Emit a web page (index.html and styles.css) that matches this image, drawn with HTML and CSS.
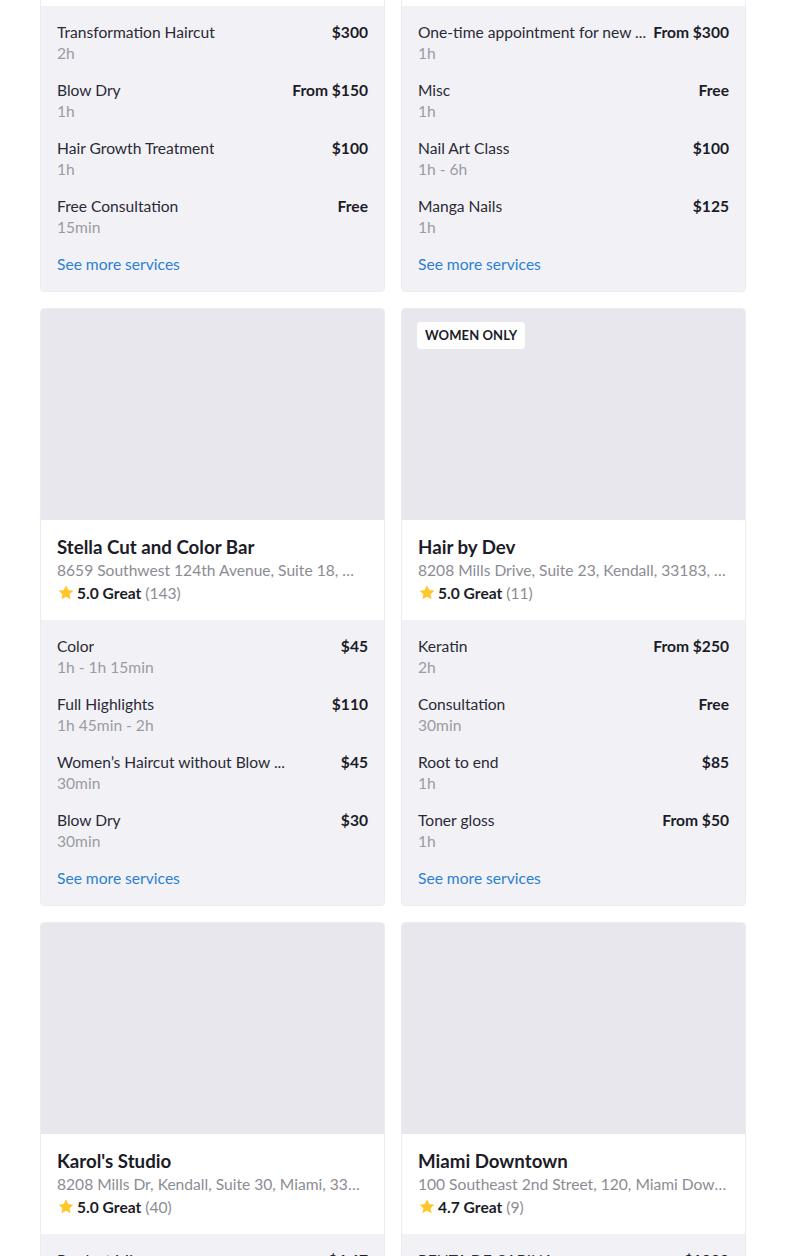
FILE: index.html
```html
<!DOCTYPE html>
<html>
<head>
<meta charset="utf-8">
<link rel="stylesheet" href="styles.css">
</head>
<body>
<main class="grid">
  <article class="card">
    <div class="photo"></div>
    <div class="info">
      <h2 class="name">Salon One</h2>
      <p class="address">123 Main Street, Miami, FL</p>
      <div class="rating"><svg class="star" viewBox="0 0 24 24"><path d="M12 1.8l3 6.2 6.8.9-5 4.7 1.3 6.8L12 17.1l-6.1 3.3 1.3-6.8-5-4.7 6.8-.9z"/></svg><b>5.0 Great</b><span class="count">(10)</span></div>
    </div>
    <div class="services">
      <div class="svc"><div class="svc-top"><span class="svc-name">Transformation Haircut</span><span class="price">$300</span></div><div class="dur">2h</div></div>
      <div class="svc"><div class="svc-top"><span class="svc-name">Blow Dry</span><span class="price">From $150</span></div><div class="dur">1h</div></div>
      <div class="svc"><div class="svc-top"><span class="svc-name">Hair Growth Treatment</span><span class="price">$100</span></div><div class="dur">1h</div></div>
      <div class="svc"><div class="svc-top"><span class="svc-name">Free Consultation</span><span class="price">Free</span></div><div class="dur">15min</div></div>
      <a class="more" href="#">See more services</a>
    </div>
  </article>

  <article class="card">
    <div class="photo"></div>
    <div class="info">
      <h2 class="name">Nail Studio</h2>
      <p class="address">456 Ocean Drive, Miami, FL</p>
      <div class="rating"><svg class="star" viewBox="0 0 24 24"><path d="M12 1.8l3 6.2 6.8.9-5 4.7 1.3 6.8L12 17.1l-6.1 3.3 1.3-6.8-5-4.7 6.8-.9z"/></svg><b>5.0 Great</b><span class="count">(12)</span></div>
    </div>
    <div class="services">
      <div class="svc"><div class="svc-top"><span class="svc-name">One-time appointment for new ...</span><span class="price">From $300</span></div><div class="dur">1h</div></div>
      <div class="svc"><div class="svc-top"><span class="svc-name">Misc</span><span class="price">Free</span></div><div class="dur">1h</div></div>
      <div class="svc"><div class="svc-top"><span class="svc-name">Nail Art Class</span><span class="price">$100</span></div><div class="dur">1h - 6h</div></div>
      <div class="svc"><div class="svc-top"><span class="svc-name">Manga Nails</span><span class="price">$125</span></div><div class="dur">1h</div></div>
      <a class="more" href="#">See more services</a>
    </div>
  </article>

  <article class="card">
    <div class="photo"></div>
    <div class="info">
      <h2 class="name">Stella Cut and Color Bar</h2>
      <p class="address">8659 Southwest 124th Avenue, Suite 18, Miami, 33183</p>
      <div class="rating"><svg class="star" viewBox="0 0 24 24"><path d="M12 1.8l3 6.2 6.8.9-5 4.7 1.3 6.8L12 17.1l-6.1 3.3 1.3-6.8-5-4.7 6.8-.9z"/></svg><b>5.0 Great</b><span class="count">(143)</span></div>
    </div>
    <div class="services">
      <div class="svc"><div class="svc-top"><span class="svc-name">Color</span><span class="price">$45</span></div><div class="dur">1h - 1h 15min</div></div>
      <div class="svc"><div class="svc-top"><span class="svc-name">Full Highlights</span><span class="price">$110</span></div><div class="dur">1h 45min - 2h</div></div>
      <div class="svc"><div class="svc-top"><span class="svc-name">Women’s Haircut without Blow ...</span><span class="price">$45</span></div><div class="dur">30min</div></div>
      <div class="svc"><div class="svc-top"><span class="svc-name">Blow Dry</span><span class="price">$30</span></div><div class="dur">30min</div></div>
      <a class="more" href="#">See more services</a>
    </div>
  </article>

  <article class="card">
    <div class="photo"><span class="badge">WOMEN ONLY</span></div>
    <div class="info">
      <h2 class="name">Hair by Dev</h2>
      <p class="address">8208 Mills Drive, Suite 23, Kendall, 33183, Miami</p>
      <div class="rating"><svg class="star" viewBox="0 0 24 24"><path d="M12 1.8l3 6.2 6.8.9-5 4.7 1.3 6.8L12 17.1l-6.1 3.3 1.3-6.8-5-4.7 6.8-.9z"/></svg><b>5.0 Great</b><span class="count">(11)</span></div>
    </div>
    <div class="services">
      <div class="svc"><div class="svc-top"><span class="svc-name">Keratin</span><span class="price">From $250</span></div><div class="dur">2h</div></div>
      <div class="svc"><div class="svc-top"><span class="svc-name">Consultation</span><span class="price">Free</span></div><div class="dur">30min</div></div>
      <div class="svc"><div class="svc-top"><span class="svc-name">Root to end</span><span class="price">$85</span></div><div class="dur">1h</div></div>
      <div class="svc"><div class="svc-top"><span class="svc-name">Toner gloss</span><span class="price">From $50</span></div><div class="dur">1h</div></div>
      <a class="more" href="#">See more services</a>
    </div>
  </article>

  <article class="card">
    <div class="photo"></div>
    <div class="info">
      <h2 class="name">Karol's Studio</h2>
      <p class="address">8208 Mills Dr, Kendall, Suite 30, Miami, 33183</p>
      <div class="rating"><svg class="star" viewBox="0 0 24 24"><path d="M12 1.8l3 6.2 6.8.9-5 4.7 1.3 6.8L12 17.1l-6.1 3.3 1.3-6.8-5-4.7 6.8-.9z"/></svg><b>5.0 Great</b><span class="count">(40)</span></div>
    </div>
    <div class="services">
      <div class="svc"><div class="svc-top"><span class="svc-name">Product Mix</span><span class="price">$6.67</span></div><div class="dur">15min</div></div>
      <a class="more" href="#">See more services</a>
    </div>
  </article>

  <article class="card">
    <div class="photo"></div>
    <div class="info">
      <h2 class="name">Miami Downtown</h2>
      <p class="address">100 Southeast 2nd Street, 120, Miami Downtown, 33131</p>
      <div class="rating"><svg class="star" viewBox="0 0 24 24"><path d="M12 1.8l3 6.2 6.8.9-5 4.7 1.3 6.8L12 17.1l-6.1 3.3 1.3-6.8-5-4.7 6.8-.9z"/></svg><b>4.7 Great</b><span class="count">(9)</span></div>
    </div>
    <div class="services">
      <div class="svc"><div class="svc-top"><span class="svc-name">RENTA DE CABINA</span><span class="price">$1000</span></div><div class="dur">1h</div></div>
      <a class="more" href="#">See more services</a>
    </div>
  </article>
</main>
</body>
</html>
```

FILE: styles.css
```css
html, body {
  margin: 0;
  padding: 0;
  background: #ffffff;
}

body {
  font-family: "Lato", "Noto Sans", sans-serif;
  color: #1c1c28;
  height: 1256px;
  overflow: hidden;
}

.grid {
  display: grid;
  grid-template-columns: 345px 345px;
  column-gap: 16px;
  row-gap: 16px;
  margin: -306px 0 0 40px;
}

.card {
  border: 1px solid #ececf0;
  border-radius: 4px;
  overflow: hidden;
  background: #ffffff;
  display: flex;
  flex-direction: column;
}

.photo {
  height: 211px;
  background: #e7e7ed;
  padding: 13px 15px;
  box-sizing: border-box;
}

.badge {
  display: inline-block;
  background: #ffffff;
  border-radius: 4px;
  padding: 0 8px;
  height: 27px;
  line-height: 27px;
  font-size: 13px;
  font-weight: 700;
  letter-spacing: 0.1px;
  color: #1c1c28;
}

.info {
  padding: 15px 16px 16px;
}

.name {
  margin: 0;
  font-size: 18.7px;
  line-height: 24px;
  font-weight: 700;
  color: #1c1c28;
}

.address {
  margin: 0;
  font-size: 15.6px;
  line-height: 22px;
  color: #8c8c94;
  white-space: nowrap;
  overflow: hidden;
  text-overflow: ellipsis;
}

.rating {
  display: flex;
  align-items: center;
  height: 23px;
  font-size: 15.6px;
}

.rating b {
  font-weight: 700;
  color: #1c1c28;
}

.star {
  width: 18px;
  height: 18px;
  fill: #ffc72c;
  margin-right: 2px;
}

.count {
  color: #8c8c94;
  margin-left: 4px;
}

.services {
  background: #f2f2f6;
  padding: 16px 16px 16px;
  display: flex;
  flex-direction: column;
  gap: 16px;
  flex: 1;
}

.svc {
  display: flex;
  flex-direction: column;
}

.svc-top {
  display: flex;
  justify-content: space-between;
  align-items: baseline;
  font-size: 15.6px;
  line-height: 21px;
}

.svc-name {
  color: #2a2a36;
  white-space: nowrap;
  overflow: hidden;
  text-overflow: ellipsis;
  max-width: 76%;
}

.price {
  font-weight: 700;
  color: #1c1c28;
  white-space: nowrap;
}

.dur {
  font-size: 15.6px;
  line-height: 21px;
  color: #9b9ba3;
}

.more {
  font-size: 15.6px;
  line-height: 21px;
  color: #2b7fd4;
  text-decoration: none;
}
```
